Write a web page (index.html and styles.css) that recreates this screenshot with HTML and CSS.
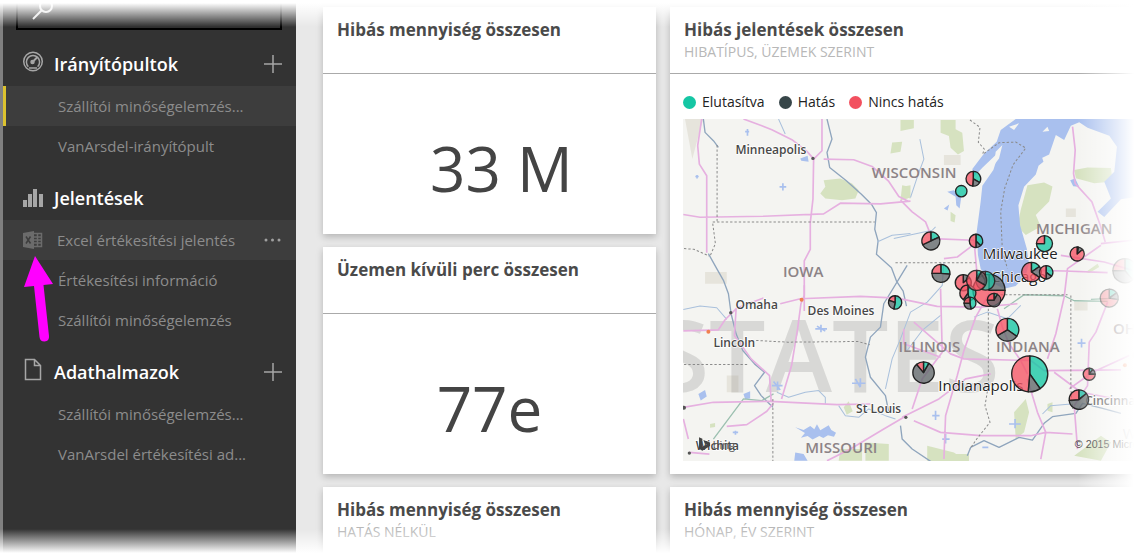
FILE: index.html
```
<!DOCTYPE html>
<html lang="hu">
<head>
<meta charset="utf-8">
<title>Szállítói minőségelemzés</title>
<link rel="stylesheet" href="styles.css">
</head>
<body>
<div class="app">
  <nav class="sidebar">
    <div class="search">
      <svg class="search-icon" width="24" height="24" viewBox="0 0 24 24" aria-hidden="true"><circle cx="14" cy="7" r="6"/><path d="M9.500 11.500L1 20"/></svg>
      <input class="search-input" type="search" aria-label="Keresés">
    </div>
    <section class="group">
      <div class="group-head">
        <svg class="icon" width="22" height="26" viewBox="0 0 22 26" aria-hidden="true"><circle cx="11" cy="10.500" r="9.300"/><path d="M6.300 15.700A6.600 6.600 0 1 1 15.700 15.700"/><path d="M11 10.500L15.500 6" stroke-width="2"/><circle cx="10.500" cy="11" r="1.500" fill="#a6a6a6"/><path d="M7 17h8"/></svg>
        <h2 class="group-title">Irányítópultok</h2>
        <button class="add" type="button" aria-label="Irányítópult hozzáadása"><svg width="18" height="18" viewBox="0 0 18 18"><path d="M9 0v18M0 9h18"/></svg></button>
      </div>
      <a class="item current" href="#">Szállítói minőségelemzés...</a>
      <a class="item" href="#">VanArsdel-irányítópult</a>
    </section>
    <section class="group">
      <div class="group-head">
        <svg class="icon bars" width="22" height="22" viewBox="0 0 22 22" aria-hidden="true"><path d="M1 13h4v7H1zM6 7h4v13H6zM11 2h4v18h-4zM17 7h4v13h-4z"/></svg>
        <h2 class="group-title">Jelentések</h2>
      </div>
      <div class="row hovered">
        <svg class="icon excel" width="22" height="22" viewBox="0 0 22 22" aria-hidden="true"><path d="M1 4L12 2V20L1 18z" fill="#6b6b6b"/><path d="M12 4.500h7.500v13H12M12 8h7M12 11h7M12 14h7M15.500 5v12" fill="none" stroke="#6b6b6b"/><path d="M4 7.500L8.500 14.500M8.500 7.500L4 14.500" stroke="#3d3d3d" stroke-width="1.500"/></svg>
        <a class="item" href="#">Excel értékesítési jelentés</a>
        <button class="more" type="button" aria-label="További lehetőségek"><svg width="18" height="4" viewBox="0 0 18 4"><circle cx="2" cy="2" r="1.500"/><circle cx="8.500" cy="2" r="1.500"/><circle cx="15" cy="2" r="1.500"/></svg></button>
        <svg class="pointer" width="32" height="88" viewBox="0 0 32 88" aria-hidden="true"><path d="M12 1L30 29L20.500 30L26 81Q26.500 86 21.500 86.500Q17 86.500 16.500 82L11 31L1 32z"/></svg>
      </div>
      <a class="item" href="#">Értékesítési információ</a>
      <a class="item" href="#">Szállítói minőségelemzés</a>
    </section>
    <section class="group">
      <div class="group-head">
        <svg class="icon" width="22" height="28" viewBox="0 0 22 28" aria-hidden="true"><path d="M3.500 1.500h9l6 6v14h-15zM12.500 1.500v6h6"/></svg>
        <h2 class="group-title">Adathalmazok</h2>
        <button class="add" type="button" aria-label="Adathalmaz hozzáadása"><svg width="18" height="18" viewBox="0 0 18 18"><path d="M9 0v18M0 9h18"/></svg></button>
      </div>
      <a class="item" href="#">Szállítói minőségelemzés...</a>
      <a class="item" href="#">VanArsdel értékesítési ad...</a>
    </section>
  </nav>

  <main class="board">
    <article class="card">
      <header class="card-head"><h3 class="card-title">Hibás mennyiség összesen</h3></header>
      <p class="figure shifted">33 M</p>
    </article>
    <article class="card tall">
      <header class="card-head"><h3 class="card-title">Hibás jelentések összesen</h3><p class="card-sub">HIBATÍPUS, ÜZEMEK SZERINT</p></header>
      <ul class="legend">
        <li class="key teal">Elutasítva</li>
        <li class="key dark">Hatás</li>
        <li class="key red">Nincs hatás</li>
      </ul>
      <svg class="map" viewBox="9 12 1350 1026" preserveAspectRatio="xMinYMin slice" role="img" aria-label="Térkép">
        <rect x="9" y="12" width="1350" height="1026" fill="#f4f4f1"/>
        <g class="forest">
          <path d="M430 195l50-5 35 15 20 20-10 25-40 5-50-5-15-15 15-20zM635 82l30-2-5 30-30 5zM665 215l25-5v40l-22-5zM660 15h40v25l-40 8zM780 15h45v28l20 10 5 55-18 10-22-20-5-35-25-10zM665 210l22 5-5 35-22 5zM810 290l15 10-3 22-12-5zM1040 210l50-8 25 12-10 45-40 40 15 35-45 25-25-25 10-50zM1180 165l40-8 70 2 5 40-55 5-55-15zM1215 470l35-25 5 10-30 18z"/>
          <path d="M490 875l15-18 12 30-18 10zM480 1000h65v35h-70zM555 980l70 5v50h-70zM740 990l80 20 40 28h-120zM1000 890l35-40 10 40-15 60-25 20zM1100 865l15-5v30l-15-5zM1180 1020l80-60 30 20-30 55zM90 925l15-3v12l-15 2zM770 1015h95v23h-95z"/>
        </g>
        <g class="urban"><path d="M15 12h55l-15 50-18 70zM75 470h65v35H75zM790 120h50v30h-50zM1155 280h30v25h-30zM140 780h35v50h-35zM1180 560h40v25h-40z"/></g>
        <text class="country" x="-78" y="830">STATES</text>
        <g class="water">
          <path d="M1005 12L960 45 948 80 908 118 875 162 880 185 905 158 945 120 960 95 938 165 905 212 900 260 888 350 892 420 900 460 930 500 970 520 1005 512 1035 480 1045 445 1038 400 1018 330 1013 270 1030 215 1065 178 1080 130 1105 118 1125 60 1150 75 1170 32 1195 22 1220 38 1285 62 1308 95 1300 170 1270 200 1290 250 1250 290 1270 305 1320 252 1365 245V12z"/>
          <path d="M1065 130l15-15 8 25-15 12zM820 225l22 20-5 35-10-10-2-25-25-15zM790 280l16-12-5 18zM1168 195l15-5 12 25-18-2zM360 130l22-8 3 18-22-3zM345 935l25 8 20-12 12 10 8-15 10 18 25-15 8 14 14 8-6 12-18-4-14 8-12-6-20 10-15-10-20 5 12-14zM345 1010l25 5 12 20h-40zM55 835l20-12 5 20-18 12zM190 835l20-8v22l-15 2z"/>
          <path class="land" d="M945 110L965 90 955 130 940 150zM985 35L1015 25 1000 45zM1085 50L1100 35 1105 48z"/>
        </g>
        <g class="star"><path d="M298 215h20M308 204v22M46 184h10M51 180v10M405 640h35M410 632l25 15M422 628v22M515 803h40M525 790l15 25M540 788v25M158 950h16M166 945v12M275 810h32M280 798l20 25M292 798v25M755 900h22M765 885v28M785 970h22M795 955v28M985 925h35M1003 910v28M1190 683h24M1202 670v26M905 995h18M195 50h12M202 42v20"/></g>
        <g class="river">
          <path d="M70 12l5 40 25 25 15 20M440 12l15 60-15 40 8 45 50 40 45 40 30 30 15 25-5 50 10 35-5 40 45 40 15 40 20 30 10 45M85 415l25 45 20 35 15 40 8 60 15 60 20 50 35 40 30 25-30 40 20 30 35 35M680 450l-70 115-10 70-30 30-15 60 15 60 45 55 10 50M660 930l5 40 30 30 60 40"/>
          <path class="thin" d="M295 12l20 45M590 380l45-20 55-5M718 72l12 60-15 40-25 75M640 370l45-10 70-15 10-10M10 582l50-10 50 5 30 35M290 830l35 15 50-15 40-5 20 20 0 20M475 870l20 30 40 5 30-25 50 20 30 10M790 440l-5 70-45 50-50 30-30 80-25 60-20 90M880 605l40-15 60 20 40-40M1085 895l25-25 60-5M780 600l-55 45-45 60"/>
          <path d="M860 1020l10-25 40-20 45 20 60-30 40 8 35-50 25-20 70-10 20-30 60 15 55 15"/>
          <path class="green" d="M100 970l90-120 55 5 35-20M970 580l60-42 120 3 30 15 100 2M1230 552l60-3"/>
        </g>
        <g class="roads">
          <path d="M65 12l-12 80 5 55 22 35v230M10 298l50 8 190-3 180-7 50-32 120 2 90-8M190 12l55 20 30 12 60 30 45 35 18 20M425 12v95l-25 25-2 120-8 70v80l-18 35v150M430 132l90 2 55 20 50 45 30 45 30 15"/>
          <path d="M372 510v30l-10 25-10 75-18 110-30 100M10 646l105-3 20-30 35-35 80-30M300 565l60-15 180-7 110 5 120 25 130 2 110-10M10 875l90-15 170-3 200 10 100-2M25 970l-15-60M28 1010l60 5M140 932l60-5 60-40 20-25M670 905l-60 35-100 60-70 35M168 580l-5 80 50 70 55 50 5 80"/>
          <path d="M660 255l35 35 40 30 20 50 125 5 10 110M790 430l40-5 60-45M1175 35l8 70-5 70 5 30 50 55 25 70 15 50M1260 385l95-10M1260 390l-100 70-10 85-25 110-25 75M1060 465l90 2 130 5M1140 420l130 20 85 25M925 535l-40 70-35 100-20 75-35 120-5 130M665 905l110-55 80-60 75-15M700 620l110 95 40 15 200 5 40 30 230-2M700 915l80 35 120 10 150 0 45-10 80 5M1040 790l30 100 25 60-15 80M1120 770l80 60 160 30M1280 560l-35 90-20 30-5 130-40 60 10 130M1165 820l70-50 110-50M780 520l5 190-60 80-30 90M670 640v45l110 40M950 580l15 55 20 50 35 50 20 40"/>
        </g>
        <g class="border">
          <path d="M111 90v228M98 320h485M98 325l8 60-15 35M12 400l30 2 45 20M12 747h190M228 675l95 5 210-2 35 10M278 850v190M645 442h240M923 580v230l-10 60 15 50-40 50-20 30M1170 540v280l5 60M960 538h200M868 15l30 22-5 45 18 20-5 15M910 115l45-32 50-2 30 18-38 50-25 70-12 70 5 120 15 50"/>
        </g>
        <g class="state">
          <text x="574" y="188">WISCONSIN</text><text x="1066" y="356">MICHIGAN</text><text x="308" y="485">IOWA</text>
          <text x="654" y="708">ILLINOIS</text><text x="946" y="708">INDIANA</text><text x="375" y="1013">MISSOURI</text><text x="1296" y="655">OHIO</text>
        </g>
        <g class="pale"><text x="1352" y="734">Columbus</text><text x="1325" y="970">WEST</text></g>
        <g class="city">
          <text x="166" y="116">Minneapolis</text><text x="166" y="580">Omaha</text><text x="382" y="600">Des Moines</text><text x="100" y="696">Lincoln</text>
          <text x="527" y="892">St Louis</text><text x="47" y="1002">Wichita</text><text x="1213" y="868">Cincinnati</text>
        </g>
        <g class="city large"><text x="906" y="430">Milwaukee</text><text x="932" y="501">Chicago</text><text x="773" y="826">Indianapolis</text></g>
        <g class="dots"><circle cx="398" cy="130" r="5"/><circle cx="152" cy="592" r="5"/><circle cx="676" cy="905" r="5"/><circle cx="28" cy="1012" r="5"/><circle cx="12" cy="876" r="6"/><circle class="warm" cx="85" cy="649" r="6"/><circle class="warm" cx="364" cy="553" r="6"/><circle class="warm" cx="1332" cy="749" r="6"/></g>
        <g id="pies" class="pies"></g>
        <path d="M57 965l10 4v24l13-7-6-3-4-10 20 7v11l-23 14-10-6z" fill="#444"/>
        <text class="bing" x="98" y="999">bing</text>
        <text class="copyright" x="1182" y="997">© 2015 Microsoft</text>
      </svg>
    </article>
    <article class="card">
      <header class="card-head"><h3 class="card-title">Üzemen kívüli perc összesen</h3></header>
      <p class="figure">77e</p>
    </article>
    <article class="card">
      <header class="card-head"><h3 class="card-title">Hibás mennyiség összesen</h3><p class="card-sub">HATÁS NÉLKÜL</p></header>
    </article>
    <article class="card">
      <header class="card-head"><h3 class="card-title">Hibás mennyiség összesen</h3><p class="card-sub">HÓNAP, ÉV SZERINT</p></header>
    </article>
  </main>
  <div class="fade"></div>
</div>
<script src="app.js"></script>
</body>
</html>
```
FILE: app.js
```
// Pie markers: x, y, radius, end angle of teal slice, end angle of dark slice, opacity; red fills the rest.
const markers = [
  [878, 191, 22, 120, 185, 1], [842, 228, 17, 360, 360, 1], [751, 377, 27, 65, 245, 1],
  [886, 377, 20, 135, 180, 1], [1091, 385, 24, 270, 270, 1], [1189, 416, 21, 10, 50, 1],
  [1332, 466, 36, 140, 270, 0.5], [781, 474, 27, 95, 270, 1],
  [925, 525, 48, 0, 90, 1], [848, 502, 24, 0, 50, 1], [862, 533, 24, 170, 215, 1],
  [914, 496, 28, 200, 330, 0.9], [888, 495, 30, 30, 120, 0.9],
  [868, 563, 18, 170, 270, 1], [940, 554, 20, 30, 270, 1],
  [1052, 470, 29, 55, 125, 1], [1096, 471, 20, 125, 180, 1],
  [644, 561, 20, 190, 290, 1], [980, 643, 34, 125, 240, 1], [1047, 775, 54, 145, 185, 1],
  [729, 771, 32, 30, 320, 1], [1225, 776, 18, 35, 90, 1], [1194, 852, 29, 50, 265, 1],
  [1285, 548, 27, 55, 100, 0.6]
];
const NS = "http://www.w3.org/2000/svg";
const layer = document.getElementById("pies");

function point(x, y, r, deg) {
  const a = (deg - 90) * Math.PI / 180;
  return (x + r * Math.cos(a)).toFixed(1) + " " + (y + r * Math.sin(a)).toFixed(1);
}

function slice(group, x, y, r, from, to, name) {
  if (to <= from) return;
  let shape;
  if (to - from >= 360) {
    shape = document.createElementNS(NS, "circle");
    shape.setAttribute("cx", x);
    shape.setAttribute("cy", y);
    shape.setAttribute("r", r);
  } else {
    shape = document.createElementNS(NS, "path");
    shape.setAttribute("d", `M${x} ${y}L${point(x, y, r, from)}A${r} ${r} 0 ${to - from > 180 ? 1 : 0} 1 ${point(x, y, r, to)}Z`);
  }
  shape.setAttribute("class", name);
  group.appendChild(shape);
}

for (const [x, y, r, teal, dark, opacity] of markers) {
  const group = document.createElementNS(NS, "g");
  group.setAttribute("opacity", opacity);
  slice(group, x, y, r, 0, teal, "slice-teal");
  slice(group, x, y, r, teal, dark, "slice-dark");
  slice(group, x, y, r, dark, 360, "slice-red");
  layer.appendChild(group);
}
```
FILE: styles.css
```
* { box-sizing: border-box; }
body {
  margin: 0;
  background: #fff;
  font-family: "Open Sans", "Noto Sans", sans-serif;
  color: #444;
}
h2, h3, p, ul { margin: 0; padding: 0; }
button { padding: 0; border: 0; background: none; display: flex; }
.app {
  position: relative;
  display: grid;
  grid-template-columns: 296px 1fr;
  height: 100vh;
  overflow: hidden;
  padding: 3px 3px 3px 0;
}
.sidebar {
  border-left: 3px solid #808080;
  background: #333;
  display: flex;
  flex-direction: column;
  gap: 10px;
  overflow: hidden;
}
.search {
  display: flex;
  flex: none;
  align-items: flex-start;
  height: 27px;
  margin: 0 14px 2px 13px;
  padding-left: 14px;
  border: 2px solid #000;
  border-top: 0;
  background: #2e2e2e;
}
.search-icon { flex: none; fill: none; stroke: #e6e6e6; stroke-width: 2; margin-top: -4px; }
.search-input { flex: 1; min-width: 0; border: 0; background: none; color: #fff; outline: 0; }
.group { display: flex; flex-direction: column; flex: none; }
.group-head { display: flex; align-items: center; height: 44px; padding: 0 14px 0 19px; gap: 10px; }
.icon { flex: none; fill: none; stroke: #a6a6a6; stroke-width: 1.500; }
.bars { fill: #a6a6a6; stroke: none; }
.excel { stroke: none; }
.group-title { flex: 1; font-size: 18px; line-height: 28px; font-weight: 600; color: #fff; }
.add svg { fill: none; stroke: #a6a6a6; stroke-width: 1.500; }
.item { display: block; height: 40px; padding-left: 55px; font-size: 15px; line-height: 41px; color: #8c8c8c; text-decoration: none; white-space: nowrap; }
.current { background: #3d3d3d; border-left: 3px solid #dcc22f; padding-left: 52px; }
.row { position: relative; display: flex; align-items: center; padding: 0 14px 0 19px; }
.row .item { flex: 1; padding-left: 13px; }
.hovered { background: #3d3d3d; }
.more svg { fill: #a0a0a0; }
.pointer { position: absolute; left: 20px; top: 35px; z-index: 1; fill: #f0f; }
.board {
  display: grid;
  grid-template-columns: 333px 1fr;
  grid-auto-rows: 227px;
  gap: 13px 14px;
  padding: 4px 0 0 27px;
  background: #e8e8e8;
  overflow: hidden;
}
.card { background: #fff; box-shadow: 0 3px 7px #00000038; min-width: 0; overflow: hidden; }
.tall { grid-row: span 2; }
.card-head { height: 67px; padding: 11px 14px 0; border-bottom: 1px solid #aaa; }
.card-title { font-size: 17px; line-height: 24px; font-weight: 700; color: #4a4a4a; white-space: nowrap; }
.card-sub { font-size: 14px; line-height: 20px; color: #b8b8b8; }
.figure { padding-top: 50px; font-size: 62px; line-height: 88px; font-weight: 400; text-align: center; color: #444; }
.shifted { padding-left: 24px; }
.legend { display: flex; gap: 14px; padding: 18px 13px 0; list-style: none; font-size: 14px; line-height: 20px; color: #222; }
.key { display: flex; align-items: center; gap: 6px; }
.key::before { content: ""; width: 13px; height: 13px; border-radius: 50%; background: #15c6a4; }
.dark::before { background: #374649; }
.red::before { background: #f2505f; }
.map { display: block; width: calc(100% - 13px); height: 342px; margin: 7px 0 0 13px; }
.forest { fill: #d6e2c0; }
.urban { fill: #e6e4dc; }
.water { fill: #a9c0ee; }
.land { fill: #f4f4f1; }
.star { stroke: #a9c0ee; stroke-width: 5; }
.river { fill: none; stroke: #8fa5bd; stroke-width: 4; stroke-linejoin: round; }
.thin { stroke: #a9c0dc; stroke-width: 3; }
.green { stroke: #9cc0b0; }
.roads { fill: none; stroke: #e6b0e0; stroke-width: 5; stroke-linejoin: round; }
.border { fill: none; stroke: #8a8a8a; stroke-width: 3; stroke-dasharray: 7 6; }
.country { font-size: 300px; font-weight: 600; fill: #808080; fill-opacity: 0.24; }
.state { font-size: 45px; font-weight: 600; fill: #8c8386; }
.pale { font-size: 44px; fill: #bbb; }
.city { font-size: 36px; font-weight: 600; fill: #484848; stroke: #fff; stroke-width: 4; paint-order: stroke; }
.large { font-size: 45px; font-weight: 400; fill: #222; }
.dots { fill: #555; }
.warm { fill: #f08050; }
.pies { stroke: #222; stroke-width: 4; fill-opacity: 0.78; stroke-linejoin: round; }
.slice-teal { fill: #15c6a4; }
.slice-dark { fill: #60666a; }
.slice-red { fill: #f65565; }
.bing { font-size: 33px; fill: #555; }
.copyright { font-family: "Liberation Sans", sans-serif; font-size: 32px; fill: #333; }
.fade {
  position: absolute;
  inset: 3px 3px 3px 0;
  z-index: 2;
  pointer-events: none;
  background:
    linear-gradient(to bottom, #fff, #fff0 24px),
    linear-gradient(to top, #fff, #fff0 24px),
    linear-gradient(to left, #fff, #fff0 56px);
}
```
